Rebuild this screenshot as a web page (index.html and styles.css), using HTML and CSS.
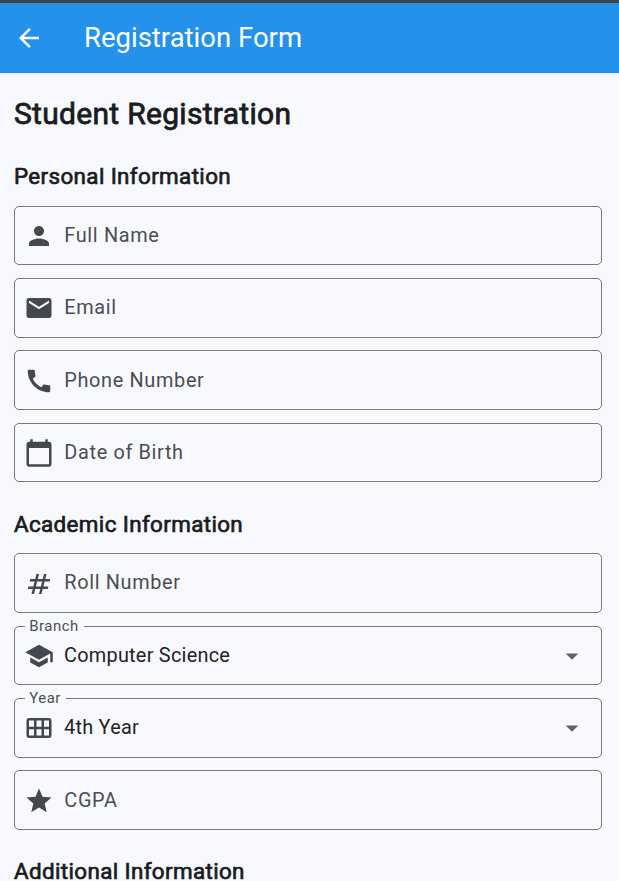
FILE: index.html
```html
<!DOCTYPE html>
<html lang="en">
<head>
<meta charset="utf-8">
<title>Registration Form</title>
<link rel="stylesheet" href="styles.css">
</head>
<body>
<header class="app-bar">
  <svg class="back" viewBox="0 0 24 24"><path d="M20 11H7.83l5.59-5.59L12 4l-8 8 8 8 1.41-1.41L7.83 13H20z"/></svg>
  <span class="bar-title">Registration Form</span>
</header>
<main class="form">
  <h1 class="title">Student Registration</h1>
  <h2 class="section">Personal Information</h2>
  <div class="fields">
    <div class="field"><svg class="icon" viewBox="0 0 24 24"><path d="M12 12c2.21 0 4-1.79 4-4s-1.79-4-4-4-4 1.79-4 4 1.79 4 4 4zm0 2c-2.67 0-8 1.34-8 4v2h16v-2c0-2.66-5.33-4-8-4z"/></svg><span class="label">Full Name</span></div>
    <div class="field"><svg class="icon" viewBox="0 0 24 24"><path d="M20 4H4c-1.1 0-1.99.9-1.99 2L2 18c0 1.1.9 2 2 2h16c1.1 0 2-.9 2-2V6c0-1.1-.9-2-2-2zm0 4l-8 5-8-5V6l8 5 8-5z"/></svg><span class="label">Email</span></div>
    <div class="field"><svg class="icon" viewBox="0 0 24 24"><path d="M20.01 15.38c-1.23 0-2.42-.2-3.53-.56-.35-.12-.74-.03-1.01.24l-1.57 1.97c-2.83-1.35-5.48-3.9-6.89-6.83l1.95-1.66c.27-.28.35-.67.24-1.02-.37-1.11-.56-2.3-.56-3.53 0-.54-.45-.99-.99-.99H4.19C3.65 3 3 3.24 3 3.99 3 13.28 10.73 21 20.01 21c.71 0 .99-.63.99-1.18v-3.45c0-.54-.45-.99-.99-.99z"/></svg><span class="label">Phone Number</span></div>
    <div class="field"><svg class="icon" viewBox="0 0 24 24"><path d="M20 3h-1V1h-2v2H7V1H5v2H4c-1.1 0-2 .9-2 2v16c0 1.1.9 2 2 2h16c1.1 0 2-.9 2-2V5c0-1.1-.9-2-2-2zm0 18H4V8h16v13z"/></svg><span class="label">Date of Birth</span></div>
  </div>
  <h2 class="section">Academic Information</h2>
  <div class="fields">
    <div class="field"><svg class="icon" viewBox="0 0 24 24"><path d="M20.5 10l.5-2h-4l1-4h-2l-1 4h-4l1-4h-2L9 8H5l-.5 2h4l-1 4h-4L3 16h4l-1 4h2l1-4h4l-1 4h2l1-4h4l.5-2h-4l1-4h4zm-7 4h-4l1-4h4l-1 4z"/></svg><span class="label">Roll Number</span></div>
    <div class="field"><span class="float">Branch</span><svg class="icon" viewBox="0 0 24 24"><path d="M5 13.18v4L12 21l7-3.82v-4L12 17l-7-3.82zM12 3L1 9l11 6 9-4.91V17h2V9L12 3z"/></svg><span class="label value">Computer Science</span><svg class="caret" viewBox="0 0 24 24"><path d="M7 10l5 5 5-5z"/></svg></div>
    <div class="field"><span class="float">Year</span><svg class="icon" viewBox="0 0 24 24"><path d="M20 4H4c-1.1 0-2 .9-2 2v12c0 1.1.9 2 2 2h16c1.1 0 2-.9 2-2V6c0-1.1-.9-2-2-2zM8 11H4V6h4v5zm6 0h-4V6h4v5zm6 0h-4V6h4v5zM8 18H4v-5h4v5zm6 0h-4v-5h4v5zm6 0h-4v-5h4v5z"/></svg><span class="label value">4th Year</span><svg class="caret" viewBox="0 0 24 24"><path d="M7 10l5 5 5-5z"/></svg></div>
    <div class="field"><svg class="icon" viewBox="0 0 24 24"><path d="M12 17.27L18.18 21l-1.64-7.03L22 9.24l-7.19-.61L12 2 9.19 8.63 2 9.24l5.46 4.73L5.82 21z"/></svg><span class="label">CGPA</span></div>
  </div>
  <h2 class="section">Additional Information</h2>
</main>
</body>
</html>
```
FILE: styles.css
```css
* { box-sizing: border-box; }
body {
  margin: 0;
  height: 881px;
  overflow: hidden;
  background: #f8f9ff;
  color: #191c20;
  font-family: Roboto, sans-serif;
}
svg { display: block; flex: none; }
.app-bar {
  display: flex;
  align-items: center;
  height: 73px;
  padding-left: 14px;
  border-top: 3px solid #40403f;
  background: #2491eb;
  color: #fff;
}
.back { width: 30px; height: 30px; fill: #fff; }
.bar-title { margin-left: 40px; font-size: 27.5px; line-height: 34px; }
.form { padding: 20px 17px 0 14px; }
.title {
  margin: 0;
  font-size: 30px;
  line-height: 42px;
  font-weight: 400;
  letter-spacing: 0.3px;
  -webkit-text-stroke: 0.8px currentColor;
}
.section {
  margin: 27px 0 15.7px;
  font-size: 22.4px;
  line-height: 28px;
  font-weight: 400;
  letter-spacing: 0.37px;
  -webkit-text-stroke: 0.7px currentColor;
}
.fields { display: flex; flex-direction: column; gap: 12.8px; }
.fields + .section { margin-top: 27.4px; margin-bottom: 15.37px; }
.fields + .section:last-child { margin-top: 26.7px; }
.field {
  position: relative;
  display: flex;
  align-items: center;
  height: 59.6px;
  padding: 1px 14px 0 9px;
  border: 1px solid #777983;
  border-radius: 5px;
}
.icon { width: 30px; height: 30px; fill: #43474e; }
.label {
  margin-left: 10.3px;
  padding-bottom: 0.2px;
  font-size: 19.9px;
  line-height: 24px;
  letter-spacing: 0.65px;
  color: #4a4d54;
}
.value { margin-left: 10px; color: #1f2226; flex: 1; letter-spacing: 0.25px; }
.caret { width: 30px; height: 30px; fill: #616161; }
.float {
  position: absolute;
  top: -10px;
  left: 10px;
  padding: 0 5px 0 4.3px;
  background: #f8f9ff;
  color: #4a4d54;
  font-size: 14.9px;
  line-height: 18px;
  letter-spacing: 0.5px;
}
```
